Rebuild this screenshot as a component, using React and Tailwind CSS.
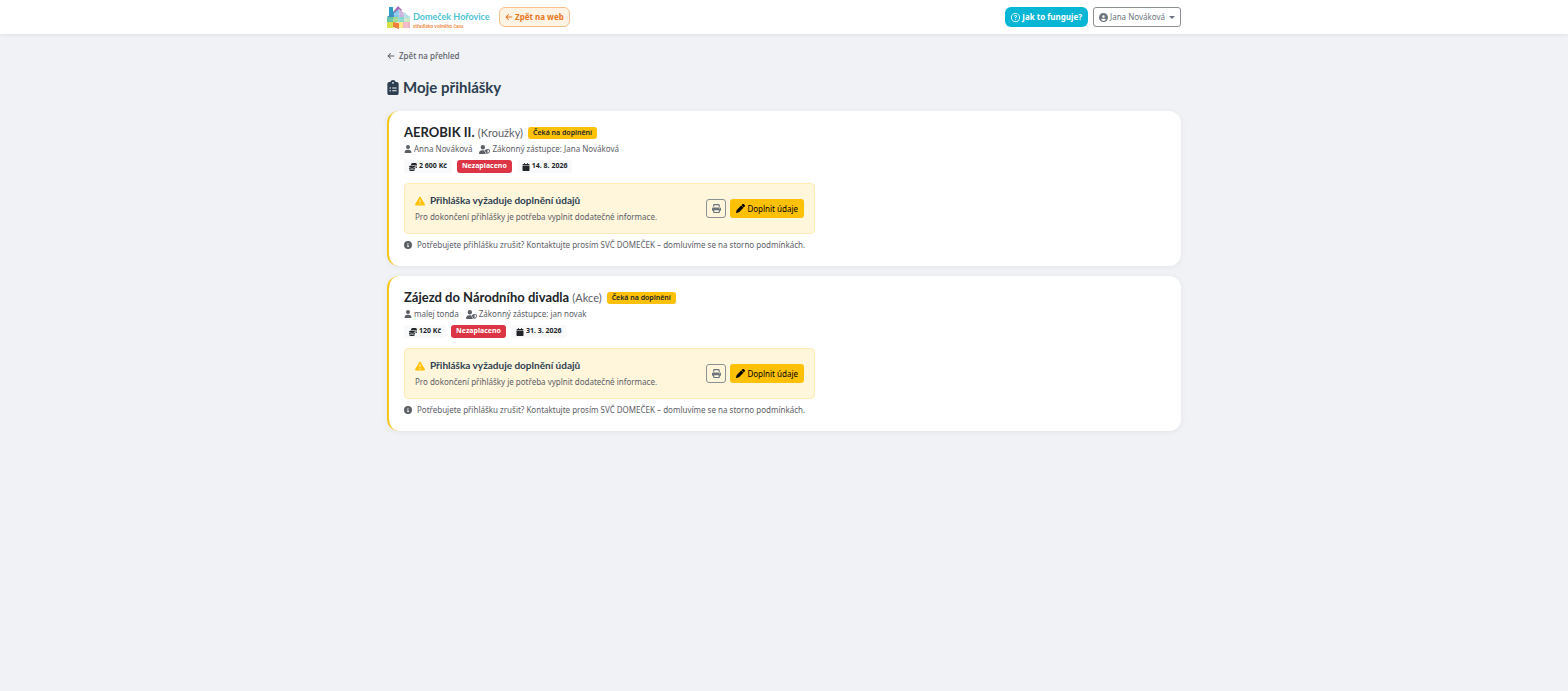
/**
 * Domeček Hořovice - Moje přihlášky
 *
 * Lists the user's applications with their status and pending actions
 */

import {
  FaArrowLeft,
  FaCalendar,
  FaCircleInfo,
  FaCircleUser,
  FaClipboardList,
  FaCoins,
  FaPen,
  FaPrint,
  FaRegCircleQuestion,
  FaTriangleExclamation,
  FaUser,
  FaUserShield,
} from 'react-icons/fa6';

const applications = [
  {
    id: 1,
    name: 'AEROBIK II.',
    category: 'Kroužky',
    participant: 'Anna Nováková',
    guardian: 'Jana Nováková',
    price: '2 600 Kč',
    date: '14. 8. 2026',
  },
  {
    id: 2,
    name: 'Zájezd do Národního divadla',
    category: 'Akce',
    participant: 'malej tonda',
    guardian: 'jan novak',
    price: '120 Kč',
    date: '31. 3. 2026',
  },
];

const Logo = () => (
  <svg viewBox="0 0 104 26" className="h-[26px] w-[104px]" role="img" aria-label="Domeček Hořovice">
    <path d="M2 3h4v8l-4 3z" fill="#2f9cc6" />
    <path d="M6 8l5-6 4 4-5 5H6z" fill="#a86bb8" />
    <path d="M0 13l8-6v6z" fill="#3f8fc0" />
    <path d="M7 9l5-4v8H7z" fill="#84c8e8" />
    <path d="M12 5l5 4v4h-5z" fill="#c9b3dc" />
    <path d="M17 8l6 5v2h-6z" fill="#b5e0ea" />
    <path d="M0 13h6v5H0z" fill="#62c6a4" />
    <path d="M6 13h5v5H6z" fill="#a0da90" />
    <path d="M11 13h6v5h-6z" fill="#86d5cf" />
    <path d="M17 14h6v4h-6z" fill="#c4e6c0" />
    <path d="M0 18h6v6H0z" fill="#d9e04a" />
    <path d="M6 18l6 1v6l-6-2z" fill="#ee7f3a" />
    <path d="M12 18h4v6h-4z" fill="#fbe98a" />
    <path d="M16 18h7v6h-7z" fill="#efb4c4" />
    <path d="M12 5v13M18 10v14M2 16h21M6 10h12M20 18v6" stroke="#fff" strokeWidth="0.5" opacity="0.5" />
    <text x="26" y="16" fontSize="9" fontWeight="700" fill="#4cc3d4" fontFamily="Lato, sans-serif">
      Domeček Hořovice
    </text>
    <text x="26" y="24" fontSize="5" fontWeight="700" fill="#ee8a3c" fontFamily="Lato, sans-serif">
      středisko volného času
    </text>
  </svg>
);

const Header = () => (
  <header className="bg-white shadow-[0_1px_4px_rgba(0,0,0,0.08)]">
    <div className="mx-auto flex h-[34px] max-w-[794px] items-center justify-between">
      <div className="flex items-center gap-2">
        <a href="#web">
          <Logo />
        </a>
        <a
          href="#zpet"
          className="flex h-5 items-center gap-[2px] rounded-md border border-[#f5c08a] bg-[#fff3e4] px-[5px] text-[8px] font-bold text-[#e8761b]"
        >
          <FaArrowLeft className="size-2" />
          Zpět na web
        </a>
      </div>
      <div className="flex items-center gap-[5px]">
        <button
          type="button"
          className="flex h-5 items-center gap-[2px] rounded-md bg-[#06b6d4] px-[6px] text-[8px] font-bold text-white"
        >
          <FaRegCircleQuestion className="size-[9px]" />
          Jak to funguje?
        </button>
        <button
          type="button"
          className="flex h-5 items-center gap-[2px] rounded-[3px] border border-[#8a9096] bg-white px-[5px] text-[8px] text-[#6c757d]"
        >
          <FaCircleUser className="size-[9px]" />
          Jana Nováková
          <span className="ml-[2px] border-x-[3px] border-t-[3px] border-x-transparent border-t-[#6c757d]" />
        </button>
      </div>
    </div>
  </header>
);

const ApplicationCard = ({ application }) => (
  <article className="rounded-xl border-l-2 border-[#f5c518] bg-white px-[15px] pt-[14px] pb-[13px] shadow-[0_1px_6px_rgba(0,0,0,0.06)]">
    <div className="flex h-4 items-center gap-[5px]">
      <h2 className="font-['Lato',sans-serif] text-[13px] font-bold text-[#212529]">
        {application.name}{' '}
        <span className="text-[11px] font-normal text-[#5c6066]">({application.category})</span>
      </h2>
      <span className="flex h-3 items-center rounded-[3px] bg-[#ffc107] px-[5px] text-[7px] font-semibold text-[#212529]">
        Čeká na doplnění
      </span>
    </div>

    <div className="flex h-4 items-center gap-[7px] text-[8px] text-[#5c6066]">
      <span className="flex items-center gap-[2px]">
        <FaUser className="size-2" />
        {application.participant}
      </span>
      <span className="flex items-center gap-[2px]">
        <FaUserShield className="size-[11px]" />
        Zákonný zástupce: {application.guardian}
      </span>
    </div>

    <div className="mt-[3px] flex h-[13px] items-center gap-[5px] text-[7px] font-bold text-[#212529]">
      <span className="flex h-full items-center gap-[2px] rounded-[3px] bg-[#f8f9fa] px-[5px]">
        <FaCoins className="size-2" />
        {application.price}
      </span>
      <span className="flex h-full items-center rounded-[3px] bg-[#dc3545] px-[5px] text-white">
        Nezaplaceno
      </span>
      <span className="flex h-full items-center gap-[2px] rounded-[3px] bg-[#f8f9fa] px-[5px]">
        <FaCalendar className="size-2" />
        {application.date}
      </span>
    </div>

    {/* Missing data notice */}
    <div className="mt-[10px] flex h-[51px] w-[411px] max-w-full items-center justify-between rounded-[4px] border border-[#ffecb5] bg-[#fff6dc] px-[10px]">
      <div>
        <h3 className="flex h-4 items-center gap-[5px] font-['Lato',sans-serif] text-[10px] font-bold text-[#2c3e50]">
          <FaTriangleExclamation className="size-[10px] text-[#ffc107]" />
          Přihláška vyžaduje doplnění údajů
        </h3>
        <p className="h-4 text-[8px] leading-4 text-[#5c6066]">
          Pro dokončení přihlášky je potřeba vyplnit dodatečné informace.
        </p>
      </div>
      <div className="flex items-center gap-1">
        <button
          type="button"
          aria-label="Vytisknout"
          className="flex h-[19px] w-5 items-center justify-center rounded-[3px] border border-[#8a9096] text-[#6c757d]"
        >
          <FaPrint className="size-[9px]" />
        </button>
        <button
          type="button"
          className="flex h-[19px] items-center gap-[2px] rounded-[3px] bg-[#ffc107] px-[6px] text-[8px] text-black"
        >
          <FaPen className="size-[9px]" />
          Doplnit údaje
        </button>
      </div>
    </div>

    <p className="mt-[3px] flex h-4 items-center gap-[5px] text-[8px] text-[#5c6066]">
      <FaCircleInfo className="size-2" />
      Potřebujete přihlášku zrušit? Kontaktujte prosím SVČ DOMEČEK – domluvíme se na storno podmínkách.
    </p>
  </article>
);

const App = () => {
  return (
    <div className="min-h-screen bg-[#f0f2f6] font-['Noto_Sans',sans-serif]">
      <Header />
      <main className="mx-auto max-w-[794px] pt-[14px]">
        <a href="#prehled" className="flex h-4 w-fit items-center gap-1 text-[8px] font-medium text-[#5c6066]">
          <FaArrowLeft className="size-2" />
          Zpět na přehled
        </a>
        <h1 className="mt-[13px] flex h-5 items-center gap-1 font-['Lato',sans-serif] text-[15px] font-bold text-[#2c3e50]">
          <FaClipboardList className="h-[15px] w-3" />
          Moje přihlášky
        </h1>
        <div className="mt-[14px] flex flex-col gap-[10px]">
          {applications.map((application) => (
            <ApplicationCard key={application.id} application={application} />
          ))}
        </div>
      </main>
    </div>
  );
};

export default App;
